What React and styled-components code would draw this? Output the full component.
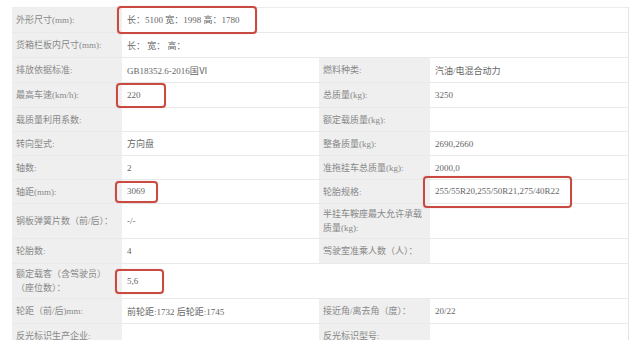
import styled, { createGlobalStyle } from "styled-components";

const Global = createGlobalStyle`
  body {
    margin: 0;
    background: #fff;
    font-family: "Liberation Serif", "Noto Sans CJK SC", serif;
  }
`;

const Page = styled.div`
  width: 640px;
  height: 340px;
  overflow: hidden;
  padding: 7px 0 0 12px;
  box-sizing: border-box;
`;

const Table = styled.table`
  width: 616px;
  table-layout: fixed;
  border-collapse: collapse;
  border-top: 1px solid #ececec;
  border-right: 1px solid #e4e4e4;
  font-size: 9px;
`;

const Row = styled.tr`
  height: ${(p) => p.h || 24}px;
  border-bottom: 1px solid #e9e9e9;
`;

const Label = styled.td`
  background: #efefef;
  color: #888;
  padding: 0 4px;
  line-height: 14px;
  vertical-align: middle;
  white-space: nowrap;
`;

const Value = styled.td`
  background: #fff;
  color: #666;
  padding: 0 5px;
  vertical-align: middle;
  white-space: nowrap;
`;

// red marker drawn over a value
const Mark = styled.span`
  position: relative;
  display: inline-block;
  line-height: 11px;
  &::after {
    content: "";
    position: absolute;
    top: -${(p) => p.v}px;
    bottom: -${(p) => p.v}px;
    left: -${(p) => p.l}px;
    right: -${(p) => p.r}px;
    border: 2px solid #c94a40;
    border-radius: 4px;
    box-shadow: 0 0 1px rgba(201, 74, 64, 0.5);
  }
`;

export default function App() {
  return (
    <Page>
      <Global />
      <Table>
        <colgroup>
          <col style={{ width: 110 }} />
          <col style={{ width: 197 }} />
          <col style={{ width: 111 }} />
          <col style={{ width: 198 }} />
        </colgroup>
        <tbody>
          <Row h={25}>
            <Label>外形尺寸(mm):</Label>
            <Value colSpan={3}>
              <Mark v={8.5} l={10} r={17}>长：5100 宽：1998 高：1780</Mark>
            </Value>
          </Row>
          <Row h={25}>
            <Label>货箱栏板内尺寸(mm):</Label>
            <Value colSpan={3}>长： 宽： 高：</Value>
          </Row>
          <Row h={25}>
            <Label>排放依据标准:</Label>
            <Value>GB18352.6-2016国Ⅵ</Value>
            <Label>燃料种类:</Label>
            <Value>汽油/电混合动力</Value>
          </Row>
          <Row h={25}>
            <Label>最高车速(km/h):</Label>
            <Value>
              <Mark v={7} l={11} r={25}>220</Mark>
            </Value>
            <Label>总质量(kg):</Label>
            <Value>3250</Value>
          </Row>
          <Row h={24}>
            <Label>载质量利用系数:</Label>
            <Value />
            <Label>额定载质量(kg):</Label>
            <Value />
          </Row>
          <Row h={24}>
            <Label>转向型式:</Label>
            <Value>方向盘</Value>
            <Label>整备质量(kg):</Label>
            <Value>2690,2660</Value>
          </Row>
          <Row h={24}>
            <Label>轴数:</Label>
            <Value>2</Value>
            <Label>准拖挂车总质量(kg):</Label>
            <Value>2000,0</Value>
          </Row>
          <Row h={24}>
            <Label>轴距(mm):</Label>
            <Value>
              <Mark v={5.5} l={12} r={13}>3069</Mark>
            </Value>
            <Label>轮胎规格:</Label>
            <Value>
              <Mark v={10.5} l={12} r={12}>255/55R20,255/50R21,275/40R22</Mark>
            </Value>
          </Row>
          <Row h={35}>
            <Label>钢板弹簧片数（前/后）：</Label>
            <Value>-/-</Value>
            <Label>
              半挂车鞍座最大允许承载
              <br />
              质量(kg):
            </Label>
            <Value />
          </Row>
          <Row h={25}>
            <Label>轮胎数:</Label>
            <Value>4</Value>
            <Label>驾驶室准乘人数（人）：</Label>
            <Value />
          </Row>
          <Row h={35}>
            <Label>
              额定载客（含驾驶员）
              <br />
              （座位数）：
            </Label>
            <Value>
              <Mark v={7} l={12} r={26}>5,6</Mark>
            </Value>
            <Value colSpan={2} />
          </Row>
          <Row h={25}>
            <Label>轮距（前/后)mm:</Label>
            <Value>前轮距:1732 后轮距:1745</Value>
            <Label>接近角/离去角（度）：</Label>
            <Value>20/22</Value>
          </Row>
          <Row h={25}>
            <Label>反光标识生产企业:</Label>
            <Value />
            <Label>反光标识型号:</Label>
            <Value />
          </Row>
        </tbody>
      </Table>
    </Page>
  );
}
